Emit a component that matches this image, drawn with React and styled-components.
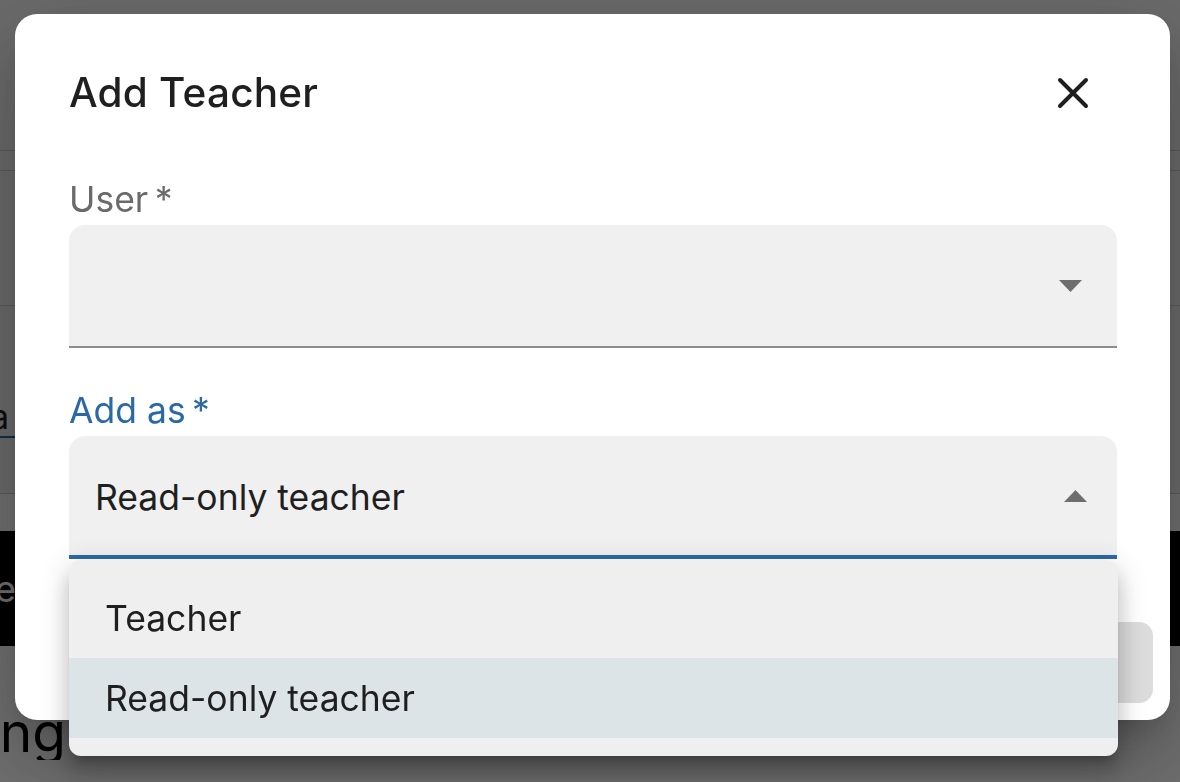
import React from 'react'
import styled, { createGlobalStyle } from 'styled-components'

const GlobalStyle = createGlobalStyle`
  html, body {
    margin: 0;
    padding: 0;
  }
  body {
    width: 1180px;
    height: 782px;
    overflow: hidden;
    font-family: Inter, 'Noto Sans', sans-serif;
    color: #1f1f1f;
  }
`

/* page behind the dialog */
const Page = styled.div`
  width: 1180px;
  height: 782px;
  display: flex;
  flex-direction: column;
  background: #ffffff;
  overflow: hidden;
`

const Band = styled.div`
  flex: 0 0 ${(p) => p.h}px;
  height: ${(p) => p.h}px;
  background: ${(p) => p.bg || '#f3f3f3'};
  border-bottom: ${(p) => (p.line ? '1px solid #cfcfcf' : 'none')};
  box-sizing: border-box;
  display: flex;
  align-items: ${(p) => p.align || 'center'};
  overflow: hidden;
`

const Clip = styled.div`
  width: ${(p) => p.w}px;
  display: flex;
  justify-content: flex-end;
  overflow: hidden;
  white-space: nowrap;
  flex-shrink: 0;
`

const InputValue = styled.div`
  font-size: 34px;
  line-height: 38px;
  color: #1f1f1f;
  border-bottom: 2px solid #2a69a6;
  width: 320px;
  display: flex;
  overflow: hidden;
  margin-top: 92px;
`

const BannerText = styled.span`
  font-size: 36px;
  color: #ffffff;
`

const BigHeading = styled.span`
  font-size: 55px;
  font-weight: 400;
  color: #000000;
  line-height: 56px;
  margin-top: 58px;
`

/* overlay + dialog */
const Backdrop = styled.div`
  position: fixed;
  inset: 0;
  background: rgba(0, 0, 0, 0.565);
  display: flex;
  align-items: flex-start;
  justify-content: flex-start;
  padding: 14px 0 0 15px;
`

const Dialog = styled.div`
  width: 1155px;
  height: 706px;
  box-sizing: border-box;
  background: #ffffff;
  border-radius: 22px;
  display: flex;
  flex-direction: column;
  box-shadow: 0 22px 30px -14px rgba(0, 0, 0, 0.2), 0 48px 76px 6px rgba(0, 0, 0, 0.14),
    0 18px 92px 16px rgba(0, 0, 0, 0.12);
`

const TitleRow = styled.div`
  display: flex;
  align-items: flex-start;
  justify-content: space-between;
  padding: 54px 53px 0 54px;
`

const Title = styled.h2`
  margin: 1px 0 0 0;
  font-size: 40.5px;
  line-height: 48px;
  font-weight: 500;
  color: #1f1f1f;
  letter-spacing: 0.2px;
`

const CloseButton = styled.button`
  width: 48px;
  height: 48px;
  margin: 1px 20px 0 0;
  border: none;
  background: transparent;
  padding: 0;
  display: flex;
  align-items: center;
  justify-content: center;
  cursor: pointer;
  color: #1f1f1f;
`

const Content = styled.div`
  padding: 61px 53px 0 54px;
  display: flex;
  flex-direction: column;
`

const Label = styled.label`
  display: block;
  font-size: 35.5px;
  line-height: 44px;
  color: ${(p) => (p.focused ? '#2a69a6' : '#6a6a6a')};
  margin: ${(p) => (p.first ? '0' : '41px')} 0 3px 0;
`

const FieldWrap = styled.div`
  position: relative;
`

const Field = styled.div`
  height: ${(p) => (p.focused ? 119 : 121)}px;
  background: #f0f0f0;
  border-radius: 16px 16px 0 0;
  border-bottom: ${(p) => (p.focused ? '4px solid #2a69a6' : '2px solid #8c8c8c')};
  display: flex;
  align-items: center;
  justify-content: space-between;
  padding: 0 ${(p) => (p.focused ? 30 : 35)}px 0 26px;
`

const Value = styled.span`
  font-size: 35.5px;
  color: #1f1f1f;
  margin-top: 3px;
`

const Menu = styled.ul`
  position: absolute;
  top: calc(100% + 1px);
  left: 0;
  right: -1px;
  margin: 0;
  padding: 18px 0;
  list-style: none;
  background: #efefef;
  border-radius: 12px;
  box-shadow: 0 10px 10px -6px rgba(0, 0, 0, 0.2), 0 16px 20px 2px rgba(0, 0, 0, 0.14),
    0 6px 28px 4px rgba(0, 0, 0, 0.12);
  z-index: 2;
`

const MenuItem = styled.li`
  height: 80px;
  display: flex;
  align-items: center;
  padding-left: 36px;
  font-size: 35.5px;
  color: #1f1f1f;
  background: ${(p) => (p.selected ? '#dde4e8' : 'transparent')};
`

const Actions = styled.div`
  margin-top: auto;
  display: flex;
  justify-content: flex-end;
  padding: 0 17px 17px 0;
`

const ActionButton = styled.button`
  width: 160px;
  height: 81px;
  border: none;
  border-radius: 14px;
  background: #dcdcdc;
  color: #a3a3a3;
  font-family: inherit;
  font-size: 32px;
  font-weight: 500;
`

function Caret({ up }) {
  return (
    <svg width="23" height="12" viewBox="0 0 23 12">
      <polygon
        points={up ? '0,12 11.5,0 23,12' : '0,0 11.5,12 23,0'}
        fill="#6e6e6e"
      />
    </svg>
  )
}

function CloseIcon() {
  return (
    <svg width="32" height="32" viewBox="0 0 32 32">
      <path
        d="M3 3 L29 29 M29 3 L3 29"
        stroke="#1f1f1f"
        strokeWidth="4"
        strokeLinecap="round"
        fill="none"
      />
    </svg>
  )
}

export default function App() {
  return (
    <>
      <GlobalStyle />
      <Page>
        <Band h={151} line />
        <Band h={20} line />
        <Band h={135} line />
        <Band h={132} align="flex-start">
          <InputValue>
            <Clip w={9}>
              <span>Lina</span>
            </Clip>
          </InputValue>
        </Band>
        <Band h={56} line />
        <Band h={37} bg="#ffffff" />
        <Band h={115} bg="#000000">
          <Clip w={16}>
            <BannerText>Manage</BannerText>
          </Clip>
        </Band>
        <Band h={137} bg="#ffffff" align="flex-start">
          <Clip w={66}>
            <BigHeading>Teaching</BigHeading>
          </Clip>
        </Band>
      </Page>

      <Backdrop>
        <Dialog role="dialog" aria-labelledby="add-teacher-title">
          <TitleRow>
            <Title id="add-teacher-title">Add Teacher</Title>
            <CloseButton aria-label="Close">
              <CloseIcon />
            </CloseButton>
          </TitleRow>

          <Content>
            <Label first>User{'\u2009'}*</Label>
            <FieldWrap>
              <Field>
                <Value />
                <Caret />
              </Field>
            </FieldWrap>

            <Label focused>Add as{'\u2009'}*</Label>
            <FieldWrap>
              <Field focused>
                <Value>Read-only teacher</Value>
                <Caret up />
              </Field>
              <Menu role="listbox">
                <MenuItem>Teacher</MenuItem>
                <MenuItem selected>Read-only teacher</MenuItem>
              </Menu>
            </FieldWrap>
          </Content>

          <Actions>
            <ActionButton disabled>Add</ActionButton>
          </Actions>
        </Dialog>
      </Backdrop>
    </>
  )
}
